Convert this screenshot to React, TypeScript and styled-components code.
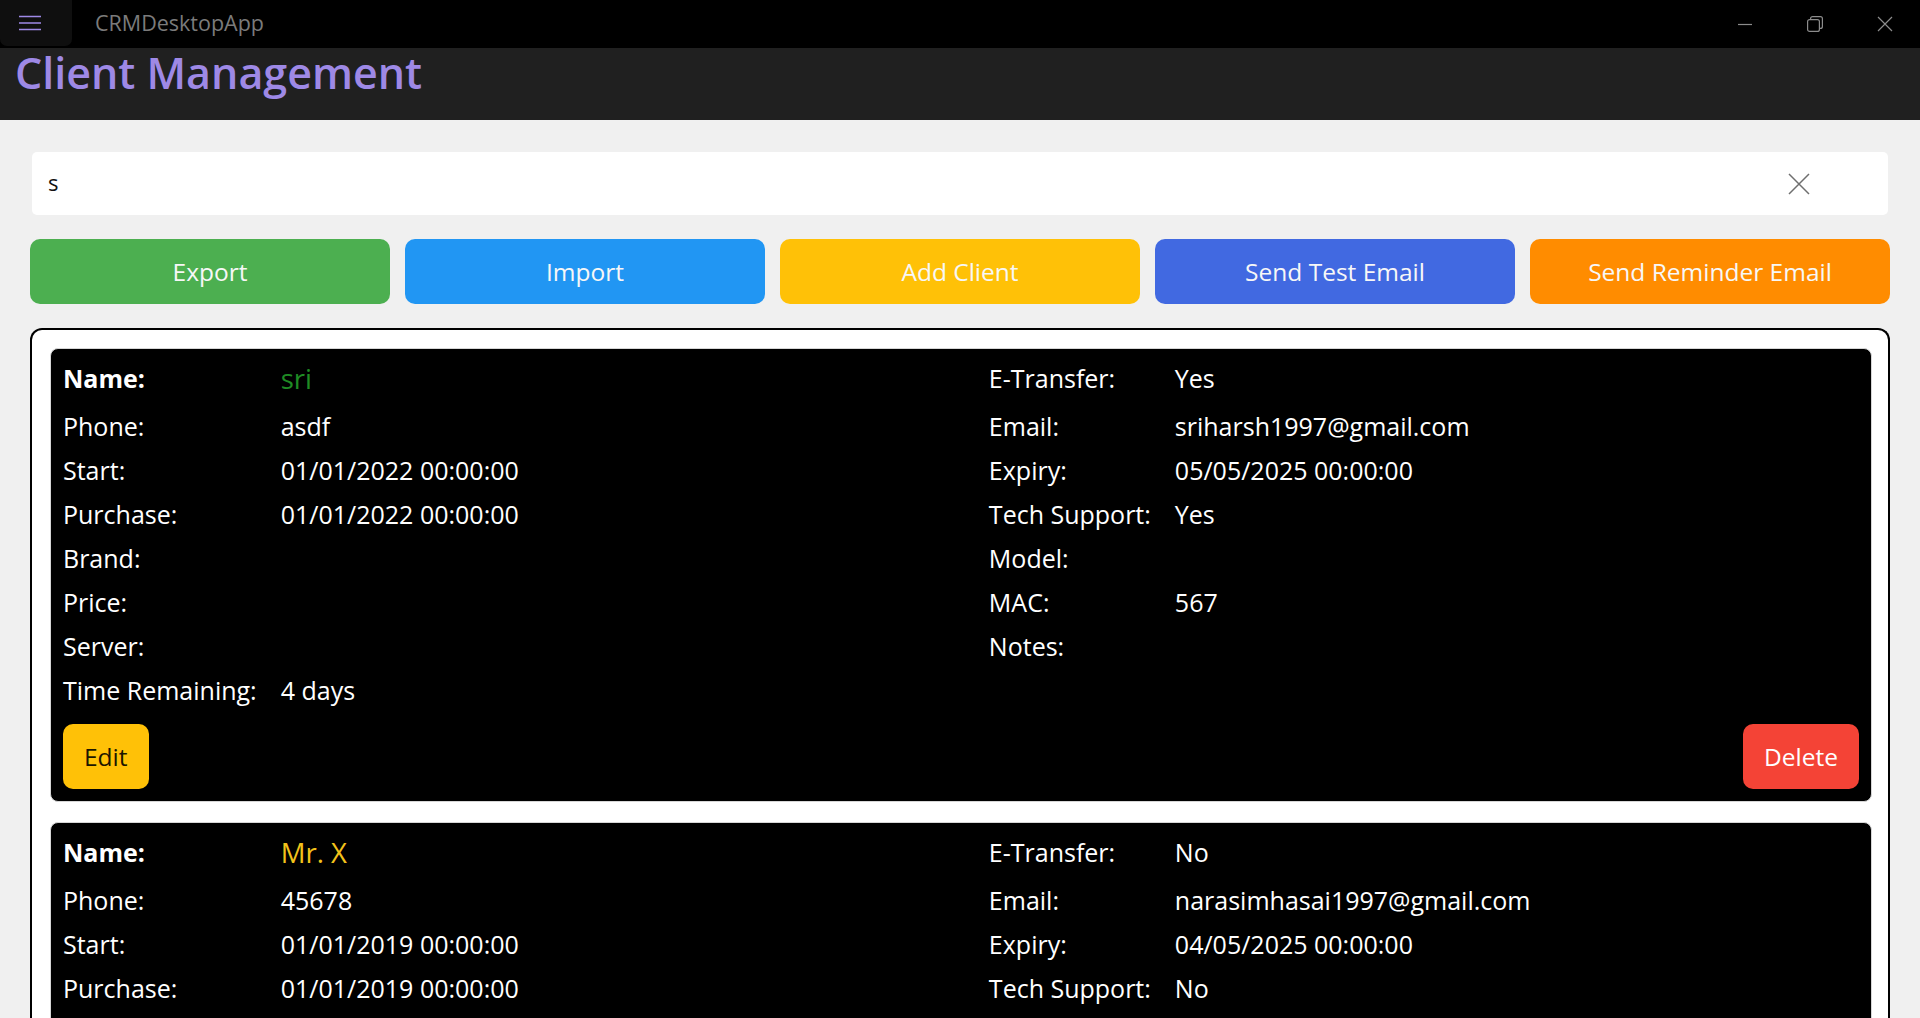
import styled, { createGlobalStyle } from "styled-components";

const GlobalStyle = createGlobalStyle`
  html, body {
    margin: 0;
    padding: 0;
    height: 100%;
    overflow: hidden;
    background: #f0f0f0;
    font-family: "Open Sans", "Noto Sans", sans-serif;
  }
  * { box-sizing: border-box; }
`;

const Window = styled.div`
  display: flex;
  flex-direction: column;
  height: 100vh;
  overflow: hidden;
`;

const TitleBar = styled.div`
  height: 48px;
  flex-shrink: 0;
  background: #000;
  display: flex;
  align-items: flex-start;
`;

const MenuButton = styled.div`
  width: 72px;
  height: 46px;
  background: #0f0f0f;
  border-radius: 0 0 7px 7px;
  display: flex;
  align-items: center;
  padding-left: 18px;
  margin-right: 23px;
`;

const AppName = styled.span`
  font-size: 21.5px;
  line-height: 46px;
  color: #7b7b7b;
  flex: 1;
`;

const WindowControls = styled.div`
  display: flex;
  height: 48px;
`;

const ControlButton = styled.div`
  width: 70px;
  height: 48px;
  display: flex;
  align-items: center;
  justify-content: center;
  color: #8c8c8c;
`;

const Header = styled.div`
  height: 72px;
  flex-shrink: 0;
  background: #202020;
  padding: 3px 15px 0;
`;

const Title = styled.h1`
  margin: 0;
  font-size: 43px;
  line-height: 44px;
  font-weight: 600;
  color: #9e89e6;
`;

const Content = styled.div`
  flex: 1;
  padding: 32px 30px 0;
  display: flex;
  flex-direction: column;
  gap: 24px;
  min-height: 0;
`;

const SearchBox = styled.div`
  margin: 0 2px;
  height: 63px;
  background: #fff;
  border-radius: 5px;
  display: flex;
  align-items: center;
  padding: 0 78px 0 16px;
`;

const SearchText = styled.span`
  flex: 1;
  font-size: 22px;
  line-height: 22px;
  padding-bottom: 4px;
  color: #111;
`;

const ButtonRow = styled.div`
  display: grid;
  grid-template-columns: repeat(5, 1fr);
  gap: 15px;
`;

const ActionButton = styled.button<{ $bg: string }>`
  height: 65px;
  border: none;
  border-radius: 10px;
  background: ${(p) => p.$bg};
  color: #f7f7f7;
  font-family: inherit;
  font-size: 24.5px;
  padding: 0;
`;

const ClientList = styled.div`
  border: 2px solid #000;
  border-bottom: none;
  border-radius: 12px 12px 0 0;
  background: #fff;
  padding: 18px 16px 0 18px;
  display: flex;
  flex-direction: column;
  gap: 20px;
  flex: 1;
  overflow: hidden;
`;

const Card = styled.div`
  flex-shrink: 0;
  background: #000;
  border: 1px solid #d6d6d6;
  border-radius: 8px;
  padding: 3px 12px 12px;
  color: #fff;
`;

const Fields = styled.div`
  display: grid;
  grid-template-columns: auto 1fr auto 1fr;
  grid-template-rows: 52px;
  grid-auto-rows: 44px;
  column-gap: 24px;
  align-items: center;
  font-size: 25px;
`;

const Label = styled.span<{ $bold?: boolean }>`
  font-weight: ${(p) => (p.$bold ? 700 : 400)};
  white-space: nowrap;
`;

const Value = styled.span<{ $color?: string; $large?: boolean }>`
  color: ${(p) => p.$color ?? "#fff"};
  font-size: ${(p) => (p.$large ? "27.5px" : "inherit")};
  white-space: nowrap;
`;

const CardActions = styled.div`
  display: flex;
  justify-content: space-between;
  margin-top: 12px;
`;

const SmallButton = styled.button<{ $bg: string; $fg: string }>`
  height: 65px;
  padding: 0 21px;
  border: none;
  border-radius: 10px;
  background: ${(p) => p.$bg};
  color: ${(p) => p.$fg};
  font-family: inherit;
  font-size: 24.5px;
`;

interface Client {
  name: string;
  nameColor: string;
  phone: string;
  start: string;
  purchase: string;
  brand: string;
  price: string;
  server: string;
  remaining: string;
  eTransfer: string;
  email: string;
  expiry: string;
  techSupport: string;
  model: string;
  mac: string;
  notes: string;
}

const clients: Client[] = [
  {
    name: "sri",
    nameColor: "#1f8b24",
    phone: "asdf",
    start: "01/01/2022 00:00:00",
    purchase: "01/01/2022 00:00:00",
    brand: "",
    price: "",
    server: "",
    remaining: "4 days",
    eTransfer: "Yes",
    email: "sriharsh1997@gmail.com",
    expiry: "05/05/2025 00:00:00",
    techSupport: "Yes",
    model: "",
    mac: "567",
    notes: "",
  },
  {
    name: "Mr. X",
    nameColor: "#f2c21b",
    phone: "45678",
    start: "01/01/2019 00:00:00",
    purchase: "01/01/2019 00:00:00",
    brand: "",
    price: "",
    server: "",
    remaining: "3 days",
    eTransfer: "No",
    email: "narasimhasai1997@gmail.com",
    expiry: "04/05/2025 00:00:00",
    techSupport: "No",
    model: "",
    mac: "",
    notes: "",
  },
];

const ClientCard = ({ c }: { c: Client }) => {
  const rows: [string, string, string, string][] = [
    ["Phone:", c.phone, "Email:", c.email],
    ["Start:", c.start, "Expiry:", c.expiry],
    ["Purchase:", c.purchase, "Tech Support:", c.techSupport],
    ["Brand:", c.brand, "Model:", c.model],
    ["Price:", c.price, "MAC:", c.mac],
    ["Server:", c.server, "Notes:", c.notes],
    ["Time Remaining:", c.remaining, "", ""],
  ];
  return (
    <Card>
      <Fields>
        <Label $bold>Name:</Label>
        <Value $color={c.nameColor} $large>
          {c.name}
        </Value>
        <Label>E-Transfer:</Label>
        <Value>{c.eTransfer}</Value>
        {rows.map((r) => [
          <Label key={r[0] + "l"}>{r[0]}</Label>,
          <Value key={r[0] + "v"}>{r[1]}</Value>,
          <Label key={r[0] + "rl"}>{r[2]}</Label>,
          <Value key={r[0] + "rv"}>{r[3]}</Value>,
        ])}
      </Fields>
      <CardActions>
        <SmallButton $bg="#ffc107" $fg="#1c1600">
          Edit
        </SmallButton>
        <SmallButton $bg="#f44336" $fg="#fff">
          Delete
        </SmallButton>
      </CardActions>
    </Card>
  );
};

export default function App() {
  return (
    <>
      <GlobalStyle />
      <Window>
        <TitleBar>
          <MenuButton>
            <svg width="24" height="16" viewBox="0 0 24 16">
              <path d="M1 1.5h22M1 8h22M1 14.5h22" stroke="#9e89e6" strokeWidth="1.6" />
            </svg>
          </MenuButton>
          <AppName>CRMDesktopApp</AppName>
          <WindowControls>
            <ControlButton>
              <svg width="16" height="16" viewBox="0 0 16 16">
                <path d="M1 8.5h14" stroke="currentColor" strokeWidth="1.2" />
              </svg>
            </ControlButton>
            <ControlButton>
              <svg width="16" height="16" viewBox="0 0 16 16">
                <rect x="0.6" y="3.6" width="11.8" height="11.8" rx="2" fill="none" stroke="currentColor" strokeWidth="1.2" />
                <path d="M3.6 3.4V2.6a2 2 0 0 1 2-2h7.8a2 2 0 0 1 2 2v7.8a2 2 0 0 1-2 2h-0.8" fill="none" stroke="currentColor" strokeWidth="1.2" />
              </svg>
            </ControlButton>
            <ControlButton>
              <svg width="16" height="16" viewBox="0 0 16 16">
                <path d="M1 1l14 14M15 1L1 15" stroke="currentColor" strokeWidth="1.2" />
              </svg>
            </ControlButton>
          </WindowControls>
        </TitleBar>
        <Header>
          <Title>Client Management</Title>
        </Header>
        <Content>
          <SearchBox>
            <SearchText>s</SearchText>
            <svg width="22" height="22" viewBox="0 0 22 22">
              <path d="M1 1l20 20M21 1L1 21" stroke="#6f6f6f" strokeWidth="1.5" />
            </svg>
          </SearchBox>
          <ButtonRow>
            <ActionButton $bg="#4caf50">Export</ActionButton>
            <ActionButton $bg="#2196f3">Import</ActionButton>
            <ActionButton $bg="#ffc107">Add Client</ActionButton>
            <ActionButton $bg="#4169e1">Send Test Email</ActionButton>
            <ActionButton $bg="#ff8c00">Send Reminder Email</ActionButton>
          </ButtonRow>
          <ClientList>
            {clients.map((c) => (
              <ClientCard key={c.name} c={c} />
            ))}
          </ClientList>
        </Content>
      </Window>
    </>
  );
}
